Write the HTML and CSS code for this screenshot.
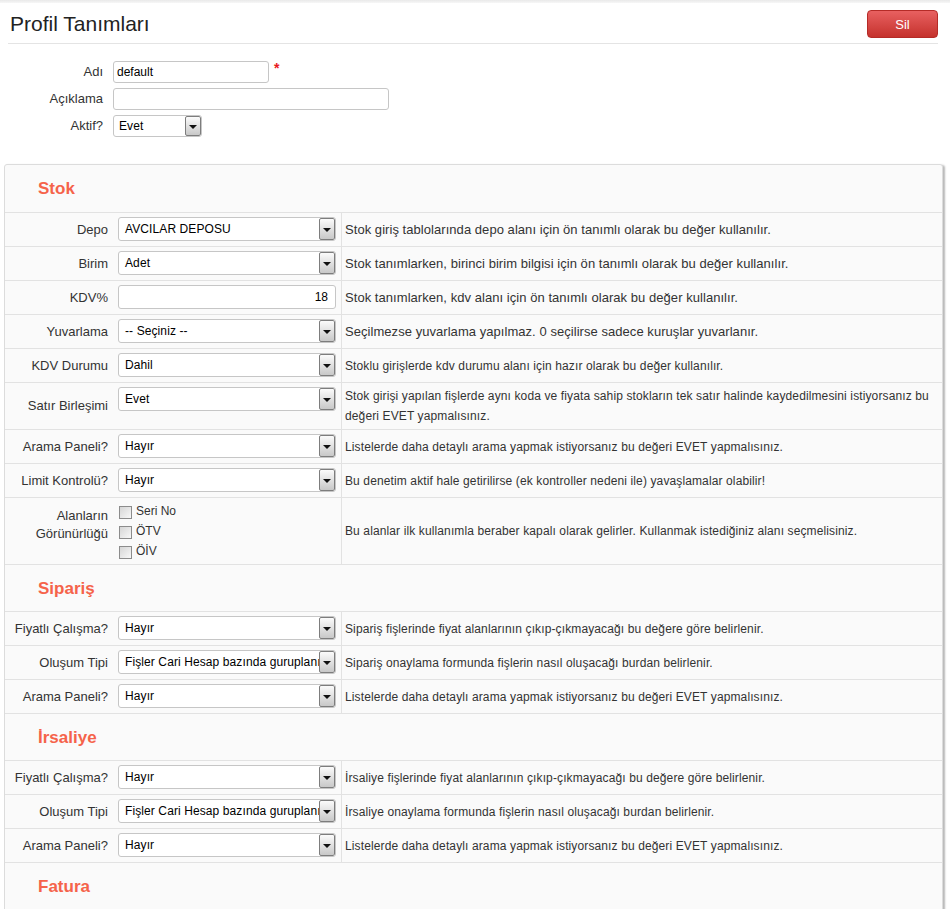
FILE: index.html
```html
<!DOCTYPE html>
<html lang="tr">
<head>
<meta charset="utf-8">
<title>Profil Tanımları</title>
<link rel="stylesheet" href="styles.css">
</head>
<body>
<div class="topband"></div>
<header class="page-header">
  <h1 class="page-title">Profil Tanımları</h1>
  <button class="btn-danger" type="button">Sil</button>
</header>

<div class="profile-form">
  <label class="f-label">Adı</label>
  <div class="f-field"><input class="text-input w-name" type="text" value="default"><span class="req">*</span></div>
  <label class="f-label">Açıklama</label>
  <div class="f-field"><input class="text-input w-desc" type="text" value=""></div>
  <label class="f-label">Aktif?</label>
  <div class="f-field"><div class="select small"><span class="sel-text">Evet</span><span class="sel-btn"></span></div></div>
</div>

<div class="panel">
  <section class="section">
    <div class="sec-head">Stok</div>
    <div class="row">
      <div class="cell-label">Depo</div>
      <div class="cell-ctrl"><div class="select"><span class="sel-text">AVCILAR DEPOSU</span><span class="sel-btn"></span></div></div>
      <div class="cell-desc lg">Stok giriş tablolarında depo alanı için ön tanımlı olarak bu değer kullanılır.</div>
    </div>
    <div class="row">
      <div class="cell-label">Birim</div>
      <div class="cell-ctrl"><div class="select"><span class="sel-text">Adet</span><span class="sel-btn"></span></div></div>
      <div class="cell-desc lg">Stok tanımlarken, birinci birim bilgisi için ön tanımlı olarak bu değer kullanılır.</div>
    </div>
    <div class="row">
      <div class="cell-label">KDV%</div>
      <div class="cell-ctrl"><input class="text-input num" type="text" value="18"></div>
      <div class="cell-desc lg">Stok tanımlarken, kdv alanı için ön tanımlı olarak bu değer kullanılır.</div>
    </div>
    <div class="row">
      <div class="cell-label">Yuvarlama</div>
      <div class="cell-ctrl"><div class="select"><span class="sel-text">-- Seçiniz --</span><span class="sel-btn"></span></div></div>
      <div class="cell-desc lg">Seçilmezse yuvarlama yapılmaz. 0 seçilirse sadece kuruşlar yuvarlanır.</div>
    </div>
    <div class="row">
      <div class="cell-label">KDV Durumu</div>
      <div class="cell-ctrl"><div class="select"><span class="sel-text">Dahil</span><span class="sel-btn"></span></div></div>
      <div class="cell-desc">Stoklu girişlerde kdv durumu alanı için hazır olarak bu değer kullanılır.</div>
    </div>
    <div class="row">
      <div class="cell-label">Satır Birleşimi</div>
      <div class="cell-ctrl"><div class="select"><span class="sel-text">Evet</span><span class="sel-btn"></span></div></div>
      <div class="cell-desc">Stok girişi yapılan fişlerde aynı koda ve fiyata sahip stokların tek satır halinde kaydedilmesini istiyorsanız bu değeri EVET yapmalısınız.</div>
    </div>
    <div class="row">
      <div class="cell-label">Arama Paneli?</div>
      <div class="cell-ctrl"><div class="select"><span class="sel-text">Hayır</span><span class="sel-btn"></span></div></div>
      <div class="cell-desc">Listelerde daha detaylı arama yapmak istiyorsanız bu değeri EVET yapmalısınız.</div>
    </div>
    <div class="row">
      <div class="cell-label">Limit Kontrolü?</div>
      <div class="cell-ctrl"><div class="select"><span class="sel-text">Hayır</span><span class="sel-btn"></span></div></div>
      <div class="cell-desc">Bu denetim aktif hale getirilirse (ek kontroller nedeni ile) yavaşlamalar olabilir!</div>
    </div>
    <div class="row">
      <div class="cell-label top">Alanların<br>Görünürlüğü</div>
      <div class="cell-ctrl checks">
        <label class="check"><span class="box"></span>Seri No</label>
        <label class="check"><span class="box"></span>ÖTV</label>
        <label class="check"><span class="box"></span>ÖİV</label>
      </div>
      <div class="cell-desc">Bu alanlar ilk kullanımla beraber kapalı olarak gelirler. Kullanmak istediğiniz alanı seçmelisiniz.</div>
    </div>
  </section>

  <section class="section">
    <div class="sec-head">Sipariş</div>
    <div class="row">
      <div class="cell-label">Fiyatlı Çalışma?</div>
      <div class="cell-ctrl"><div class="select"><span class="sel-text">Hayır</span><span class="sel-btn"></span></div></div>
      <div class="cell-desc">Sipariş fişlerinde fiyat alanlarının çıkıp-çıkmayacağı bu değere göre belirlenir.</div>
    </div>
    <div class="row">
      <div class="cell-label">Oluşum Tipi</div>
      <div class="cell-ctrl"><div class="select"><span class="sel-text">Fişler Cari Hesap bazında guruplanır</span><span class="sel-btn"></span></div></div>
      <div class="cell-desc">Sipariş onaylama formunda fişlerin nasıl oluşacağı burdan belirlenir.</div>
    </div>
    <div class="row">
      <div class="cell-label">Arama Paneli?</div>
      <div class="cell-ctrl"><div class="select"><span class="sel-text">Hayır</span><span class="sel-btn"></span></div></div>
      <div class="cell-desc">Listelerde daha detaylı arama yapmak istiyorsanız bu değeri EVET yapmalısınız.</div>
    </div>
  </section>

  <section class="section">
    <div class="sec-head">İrsaliye</div>
    <div class="row">
      <div class="cell-label">Fiyatlı Çalışma?</div>
      <div class="cell-ctrl"><div class="select"><span class="sel-text">Hayır</span><span class="sel-btn"></span></div></div>
      <div class="cell-desc">İrsaliye fişlerinde fiyat alanlarının çıkıp-çıkmayacağı bu değere göre belirlenir.</div>
    </div>
    <div class="row">
      <div class="cell-label">Oluşum Tipi</div>
      <div class="cell-ctrl"><div class="select"><span class="sel-text">Fişler Cari Hesap bazında guruplanır</span><span class="sel-btn"></span></div></div>
      <div class="cell-desc">İrsaliye onaylama formunda fişlerin nasıl oluşacağı burdan belirlenir.</div>
    </div>
    <div class="row">
      <div class="cell-label">Arama Paneli?</div>
      <div class="cell-ctrl"><div class="select"><span class="sel-text">Hayır</span><span class="sel-btn"></span></div></div>
      <div class="cell-desc">Listelerde daha detaylı arama yapmak istiyorsanız bu değeri EVET yapmalısınız.</div>
    </div>
  </section>

  <section class="section">
    <div class="sec-head">Fatura</div>
    <div class="row">
      <div class="cell-label">Fiyatlı Çalışma?</div>
      <div class="cell-ctrl"><div class="select"><span class="sel-text">Hayır</span><span class="sel-btn"></span></div></div>
      <div class="cell-desc">Fatura fişlerinde fiyat alanlarının çıkıp-çıkmayacağı bu değere göre belirlenir.</div>
    </div>
  </section>
</div>
</body>
</html>
```

FILE: styles.css
```css
* { box-sizing: border-box; }

html, body {
  margin: 0;
  padding: 0;
  background: #ffffff;
  font-family: "Liberation Sans", Arial, sans-serif;
  color: #333333;
}

.topband {
  height: 3px;
  background: linear-gradient(#e9e9e9, #f7f7f7);
}

.page-header {
  display: flex;
  align-items: center;
  justify-content: space-between;
  margin: 0 12px 0 8px;
  padding: 7px 0 5px 2px;
  border-bottom: 1px solid #e4e4e4;
}

.page-title {
  margin: 0;
  font-size: 21px;
  font-weight: normal;
  line-height: 28px;
  color: #222222;
}

.btn-danger {
  width: 71px;
  height: 28px;
  border: 1px solid #b52b27;
  border-radius: 4px;
  background: linear-gradient(#e86060, #c5322d);
  color: #ffffff;
  font-family: "Liberation Sans", Arial, sans-serif;
  font-size: 13px;
  padding: 0;
}

.profile-form {
  display: grid;
  grid-template-columns: 95px auto;
  column-gap: 10px;
  row-gap: 5px;
  margin-left: 8px;
  padding: 17px 0 27px;
  align-items: center;
}

.f-label {
  text-align: right;
  font-size: 13px;
  line-height: 22px;
  color: #333333;
}

.f-field {
  display: flex;
  align-items: flex-start;
  height: 22px;
}

.text-input {
  height: 22px;
  border: 1px solid #c6c6c6;
  border-radius: 3px;
  background: #ffffff;
  font-family: "Liberation Sans", Arial, sans-serif;
  font-size: 12px;
  color: #000000;
  padding: 0 3px;
  margin: 0;
  outline: none;
}

.w-name { width: 156px; }
.w-desc { width: 276px; }

.req {
  color: #e8191d;
  font-weight: bold;
  font-size: 14px;
  line-height: 14px;
  margin-left: 5px;
}

.select {
  display: flex;
  align-items: stretch;
  width: 218px;
  height: 24px;
  border: 1px solid #c6c6c6;
  border-radius: 3px;
  background: #ffffff;
  font-size: 12px;
  color: #000000;
  overflow: hidden;
}

.select.small {
  width: 89px;
  height: 22px;
}

.sel-text {
  flex: 1;
  min-width: 0;
  padding-left: 6px;
  line-height: 22px;
  letter-spacing: 0.1px;
  white-space: nowrap;
  overflow: hidden;
}

.small .sel-text { line-height: 20px; padding-left: 5px; }

.sel-btn {
  position: relative;
  flex: 0 0 16px;
  border: 1px solid #7d7d7d;
  border-radius: 2px;
  background: linear-gradient(#fbfbfb, #c8c8c8);
}

.sel-btn::after {
  content: "";
  position: absolute;
  left: 3px;
  top: 50%;
  margin-top: -1px;
  border-left: 4px solid transparent;
  border-right: 4px solid transparent;
  border-top: 4px solid #111111;
}

.panel {
  margin: 0 7px 0 4px;
  padding-top: 1px;
  border: 1px solid #dcdcdc;
  border-radius: 3px;
  background: #fafafa;
  box-shadow: 2px 1px 2px rgba(0, 0, 0, 0.28);
}

.sec-head {
  height: 46px;
  padding: 13px 0 13px 33px;
  font-size: 17px;
  line-height: 20px;
  font-weight: bold;
  color: #f5634a;
}

.section + .section .sec-head {
  height: 47px;
  padding-top: 14px;
  border-top: 1px solid #e2e2e2;
}

.row {
  display: grid;
  grid-template-columns: 107px 229px 1fr;
  border-top: 1px solid #e2e2e2;
}

.cell-label {
  display: flex;
  align-items: center;
  justify-content: flex-end;
  text-align: right;
  padding-right: 4px;
  font-size: 13px;
  line-height: 18px;
  color: #333333;
}

.cell-label.top {
  align-items: flex-start;
  padding-top: 9px;
}

.cell-ctrl {
  padding: 4px 5px 5px 6px;
}

.cell-ctrl .num {
  width: 218px;
  height: 24px;
  text-align: right;
  padding-right: 7px;
}

.cell-ctrl.checks {
  padding: 3px 5px 3px 7px;
}

.check {
  display: flex;
  align-items: center;
  height: 20px;
  font-size: 12px;
  color: #333333;
}

.box {
  width: 13px;
  height: 13px;
  margin-right: 4px;
  margin-top: 3px;
  border: 1px solid #8c8c8c;
  background: linear-gradient(135deg, #d6d6d6, #f8f8f8);
}

.cell-desc {
  display: flex;
  align-items: center;
  border-left: 1px solid #e2e2e2;
  padding: 3px 6px 3px 3px;
  font-size: 12px;
  line-height: 20px;
  letter-spacing: 0.12px;
  color: #333333;
}

.cell-desc.lg {
  font-size: 13px;
  letter-spacing: 0.05px;
}
```
